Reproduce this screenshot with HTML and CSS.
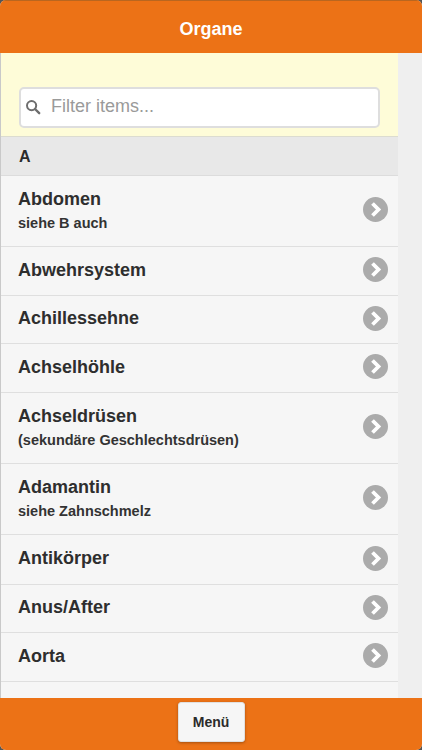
FILE: index.html
```html
<!DOCTYPE html>
<html lang="de">
<head>
<meta charset="utf-8">
<title>Organe</title>
<link rel="stylesheet" href="styles.css">
</head>
<body>
<div class="app">
  <header class="header">Organe</header>
  <main class="content">
    <div class="list">
      <form class="filter">
        <div class="search">
          <svg class="search-icon" viewBox="0 0 16 16" width="16" height="16"><circle cx="6.6" cy="6.6" r="4.6" fill="none" stroke="#6e6e6e" stroke-width="2"/><path d="M10 10l4.2 4.2" stroke="#6e6e6e" stroke-width="2.4" stroke-linecap="round"/></svg>
          <span class="placeholder">Filter items...</span>
        </div>
      </form>
      <div class="divider">A</div>
      <ul class="items">
        <li class="item h71"><div class="text"><div class="name">Abdomen</div><div class="sub">siehe B auch</div></div><svg class="chev" viewBox="0 0 25 25" width="25" height="25"><circle cx="12.5" cy="12.5" r="12.5" fill="#ababab"/><path d="M9.5 6.5l6 6-6 6" fill="none" stroke="#fff" stroke-width="3.8"/></svg></li>
        <li class="item h49"><div class="text"><div class="name">Abwehrsystem</div></div><svg class="chev" viewBox="0 0 25 25" width="25" height="25"><circle cx="12.5" cy="12.5" r="12.5" fill="#ababab"/><path d="M9.5 6.5l6 6-6 6" fill="none" stroke="#fff" stroke-width="3.8"/></svg></li>
        <li class="item h48"><div class="text"><div class="name">Achillessehne</div></div><svg class="chev" viewBox="0 0 25 25" width="25" height="25"><circle cx="12.5" cy="12.5" r="12.5" fill="#ababab"/><path d="M9.5 6.5l6 6-6 6" fill="none" stroke="#fff" stroke-width="3.8"/></svg></li>
        <li class="item h49"><div class="text"><div class="name">Achselhöhle</div></div><svg class="chev" viewBox="0 0 25 25" width="25" height="25"><circle cx="12.5" cy="12.5" r="12.5" fill="#ababab"/><path d="M9.5 6.5l6 6-6 6" fill="none" stroke="#fff" stroke-width="3.8"/></svg></li>
        <li class="item h71"><div class="text"><div class="name">Achseldrüsen</div><div class="sub">(sekundäre Geschlechtsdrüsen)</div></div><svg class="chev" viewBox="0 0 25 25" width="25" height="25"><circle cx="12.5" cy="12.5" r="12.5" fill="#ababab"/><path d="M9.5 6.5l6 6-6 6" fill="none" stroke="#fff" stroke-width="3.8"/></svg></li>
        <li class="item h71"><div class="text"><div class="name">Adamantin</div><div class="sub">siehe Zahnschmelz</div></div><svg class="chev" viewBox="0 0 25 25" width="25" height="25"><circle cx="12.5" cy="12.5" r="12.5" fill="#ababab"/><path d="M9.5 6.5l6 6-6 6" fill="none" stroke="#fff" stroke-width="3.8"/></svg></li>
        <li class="item h50"><div class="text"><div class="name">Antikörper</div></div><svg class="chev" viewBox="0 0 25 25" width="25" height="25"><circle cx="12.5" cy="12.5" r="12.5" fill="#ababab"/><path d="M9.5 6.5l6 6-6 6" fill="none" stroke="#fff" stroke-width="3.8"/></svg></li>
        <li class="item h48"><div class="text"><div class="name">Anus/After</div></div><svg class="chev" viewBox="0 0 25 25" width="25" height="25"><circle cx="12.5" cy="12.5" r="12.5" fill="#ababab"/><path d="M9.5 6.5l6 6-6 6" fill="none" stroke="#fff" stroke-width="3.8"/></svg></li>
        <li class="item h49"><div class="text"><div class="name">Aorta</div></div><svg class="chev" viewBox="0 0 25 25" width="25" height="25"><circle cx="12.5" cy="12.5" r="12.5" fill="#ababab"/><path d="M9.5 6.5l6 6-6 6" fill="none" stroke="#fff" stroke-width="3.8"/></svg></li>
      </ul>
    </div>
  </main>
  <footer class="footer"><button class="menu" type="button">Menü</button></footer>
</div>
</body>
</html>
```
FILE: styles.css
```css
* { box-sizing: border-box; }
html, body { margin: 0; padding: 0; height: 100%; background: #555; }
body { font-family: "Liberation Sans", Arial, sans-serif; color: #2b2b2b; overflow: hidden; }
.app { width: 422px; height: 750px; display: flex; flex-direction: column; border-radius: 6px; overflow: hidden; background: #efefef; }
.header { flex: 0 0 53px; background: #ec7216; color: #fff; font-size: 18px; font-weight: bold; display: flex; align-items: center; justify-content: center; padding-top: 5px; border-top: 1px solid #b9661f; }
.content { flex: 1; min-height: 0; overflow: hidden; background: #efefef; border-left: 1px solid #c9c9c9; }
.list { width: 397px; height: 100%; background: #f6f6f6; overflow: hidden; }
.filter { height: 84px; background: #fefcd8; padding: 34px 18px 0 18px; border-bottom: 1px solid #dcdcd0; }
.search { height: 41px; background: #fff; border: 2px solid #dedede; border-radius: 5px; display: flex; align-items: center; padding: 0 0 2px 4px; gap: 10px; }
.search-icon { flex: none; }
.placeholder { font-size: 18px; color: #9a9a9a; }
.divider { height: 39px; background: #e8e8e8; border-bottom: 1px solid #dcdcdc; padding: 1px 0 0 18px; font-size: 16px; font-weight: bold; display: flex; align-items: center; }
.items { list-style: none; margin: 0; padding: 0; }
.item { display: flex; align-items: center; justify-content: space-between; padding: 0 10px 3px 17px; border-bottom: 1px solid #dfdfdf; }
.h71 { height: 71px; }
.h50 { height: 50px; }
.h49 { height: 49px; }
.h48 { height: 48px; }
.name { font-size: 18px; font-weight: bold; line-height: 24px; color: #2e2e2e; }
.sub { font-size: 14.5px; font-weight: bold; line-height: 20px; margin-top: 2px; color: #333; }
.chev { flex: none; }
.footer { flex: 0 0 52px; background: #ec7216; display: flex; justify-content: center; align-items: flex-start; padding-top: 4px; }
.menu { width: 67px; height: 40px; background: #f6f6f6; border: 1px solid #e0e0e0; border-radius: 3px; box-shadow: 0 1px 3px rgba(0,0,0,.3); font: bold 14px "Liberation Sans", Arial, sans-serif; color: #2b2b2b; padding: 0; }
```
